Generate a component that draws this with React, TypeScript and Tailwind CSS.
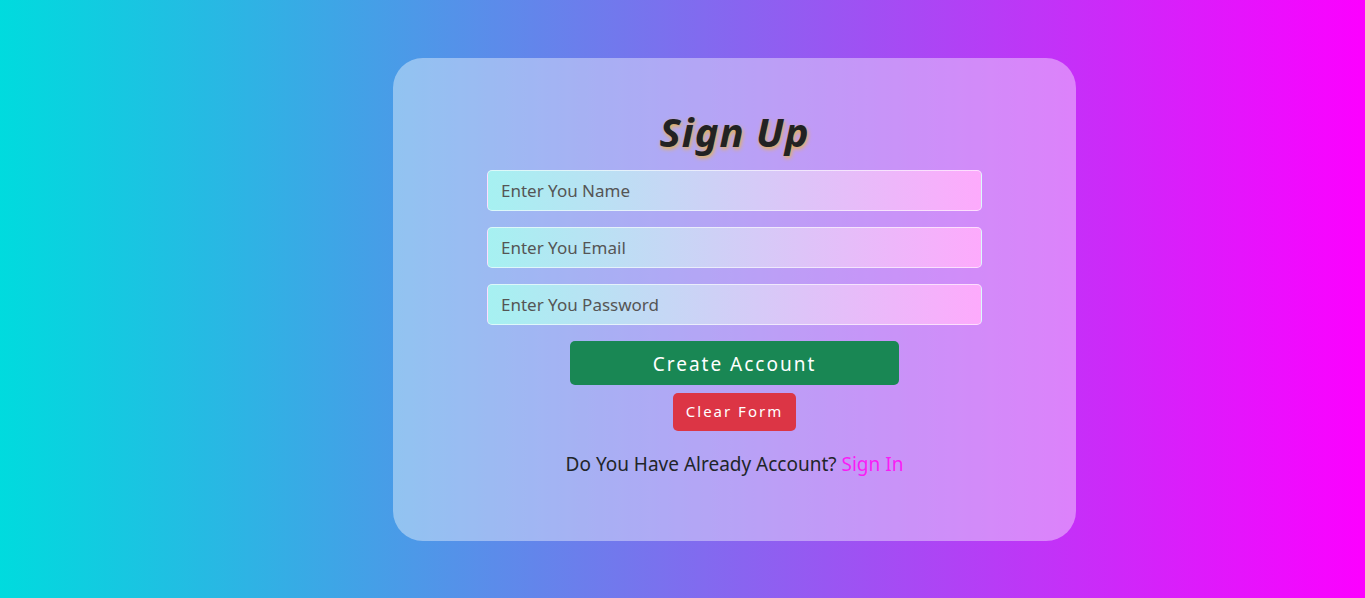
import { useState } from "react";

const fields = [
  { name: "name", type: "text", placeholder: "Enter You Name" },
  { name: "email", type: "email", placeholder: "Enter You Email" },
  { name: "password", type: "password", placeholder: "Enter You Password" },
];

export default function App() {
  const [values, setValues] = useState<Record<string, string>>({});

  return (
    <div className="min-h-[598px] h-screen w-full flex items-center justify-center pl-[104px] bg-linear-to-r/srgb from-[#00dbde] to-[#fc00ff] font-['Noto_Sans','Open_Sans',sans-serif]">
      <div className="w-[683px] h-[483px] rounded-[30px] bg-white/40 flex flex-col items-center pt-[50px]">
        <h1 className="text-[40px] leading-[48px] font-bold italic tracking-[1px] text-[#222] [text-shadow:1px_2px_4px_#e8b34a] mb-[14px]">
          Sign Up
        </h1>

        <form
          className="w-[495px] flex flex-col items-center gap-4"
          onSubmit={(e) => e.preventDefault()}
        >
          {fields.map((f) => (
            <input
              key={f.name}
              type={f.type}
              placeholder={f.placeholder}
              value={values[f.name] ?? ""}
              onChange={(e) => setValues({ ...values, [f.name]: e.target.value })}
              className="w-full h-[41px] rounded-[5px] border border-white/60 bg-linear-to-r/srgb from-[#a6f1f1] to-[#fdaafc] px-[13px] text-[17px] text-[#333] placeholder:text-[#555] outline-none"
            />
          ))}

          <button
            type="submit"
            className="w-[329px] h-[44px] pt-[3px] rounded-[5px] bg-[#198754] text-white text-[19px] tracking-[2px]"
          >
            Create Account
          </button>
        </form>

        <button
          type="button"
          onClick={() => setValues({})}
          className="mt-2 w-[123px] h-[38px] rounded-[5px] bg-[#dc3545] text-white text-[15px] tracking-[2px]"
        >
          Clear Form
        </button>

        <p className="mt-[19px] text-[19px] text-[#212529]">
          Do You Have Already Account? <a href="#" className="text-[#f91cf5]">Sign In</a>
        </p>
      </div>
    </div>
  );
}
